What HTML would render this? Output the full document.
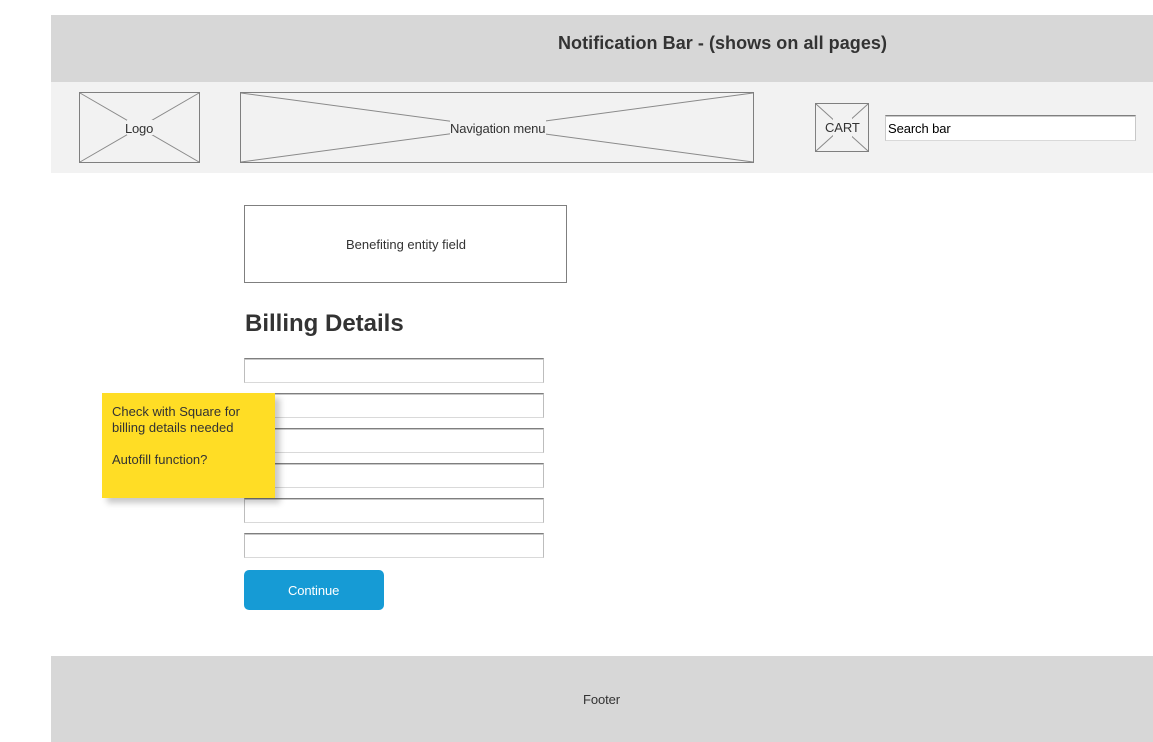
<!DOCTYPE html>
<html>
<head>
<meta charset="utf-8">
<style>
html,body{margin:0;padding:0;background:#fff;}
body{width:1153px;height:742px;position:relative;overflow:hidden;font-family:"Liberation Sans",Arial,sans-serif;font-size:13px;color:#333;}
.a{position:absolute;}
.t{position:absolute;white-space:nowrap;line-height:16px;font-size:13px;}
.inp{position:absolute;left:244px;width:300px;height:25px;box-sizing:border-box;background:#fff;border:1px solid #bdbdbd;border-top:1px solid #7f7f7f;border-bottom:1px solid #d9d9d9;box-shadow:inset 0 1px 0 #c8c8c8;}
</style>
</head>
<body>
<div class="a" style="left:51px;top:15px;width:1102px;height:67px;background:#d7d7d7"></div>
<div class="t" style="left:558px;top:33px;font-size:18px;line-height:20px;font-weight:bold;color:#333;letter-spacing:.05px">Notification Bar - (shows on all pages)</div>
<div class="a" style="left:51px;top:82px;width:1102px;height:91px;background:#f2f2f2"></div>

<svg class="a" style="left:0;top:0" width="1153" height="742" fill="none">
<g stroke="#7f7f7f" stroke-width="1">
<path d="M80 93L199 162M199 93L80 162" stroke="#8a8a8a"/>
<rect x="79.5" y="92.5" width="120" height="70"/>
<path d="M241 93L753 162M753 93L241 162" stroke="#8a8a8a"/>
<rect x="240.5" y="92.5" width="513" height="70"/>
<path d="M816 104L868 151M868 104L816 151" stroke="#8a8a8a"/>
<rect x="815.5" y="103.5" width="53" height="48"/>
<rect x="244.5" y="205.5" width="322" height="77"/>
</g>
<rect x="127" y="120" width="26" height="15" fill="#f2f2f2"/>
<rect x="450" y="120" width="96" height="15" fill="#f2f2f2"/>
<rect x="833" y="118" width="19" height="19" fill="#f2f2f2"/>
</svg>

<div class="t" style="left:125px;top:121px;letter-spacing:-.2px">Logo</div>
<div class="t" style="left:450px;top:121px;letter-spacing:-.15px">Navigation menu</div>
<div class="t" style="left:825px;top:120px;letter-spacing:-.1px">CART</div>

<div class="a" style="left:885px;top:115px;width:251px;height:26px;box-sizing:border-box;background:#fff;border:1px solid #c8c8c8;border-top:1px solid #7f7f7f;border-bottom:1px solid #d9d9d9;box-shadow:inset 0 1px 0 #c8c8c8"></div>
<div class="t" style="left:888px;top:121px;color:#000;letter-spacing:-.1px">Search bar</div>

<div class="t" style="left:346px;top:237px">Benefiting entity field</div>
<div class="t" style="left:245px;top:310px;font-size:24px;line-height:28px;font-weight:bold;color:#333">Billing Details</div>

<div class="inp" style="top:358px"></div>
<div class="inp" style="top:393px"></div>
<div class="inp" style="top:428px"></div>
<div class="inp" style="top:463px"></div>
<div class="inp" style="top:498px"></div>
<div class="inp" style="top:533px"></div>

<div class="a" style="left:102px;top:393px;width:173px;height:105px;background:#ffdd25;box-shadow:5px 5px 6px rgba(0,0,0,.22)"></div>
<div class="t" style="left:112px;top:404px;color:#333">Check with Square for<br>billing details needed<br><br>Autofill function?</div>

<div class="a" style="left:244px;top:570px;width:140px;height:40px;background:#169bd5;border-radius:5px"></div>
<div class="t" style="left:288px;top:583px;color:#fff;letter-spacing:-.1px">Continue</div>

<div class="a" style="left:51px;top:656px;width:1102px;height:86px;background:#d7d7d7"></div>
<div class="t" style="left:583px;top:692px;letter-spacing:-.1px">Footer</div>
</body>
</html>
